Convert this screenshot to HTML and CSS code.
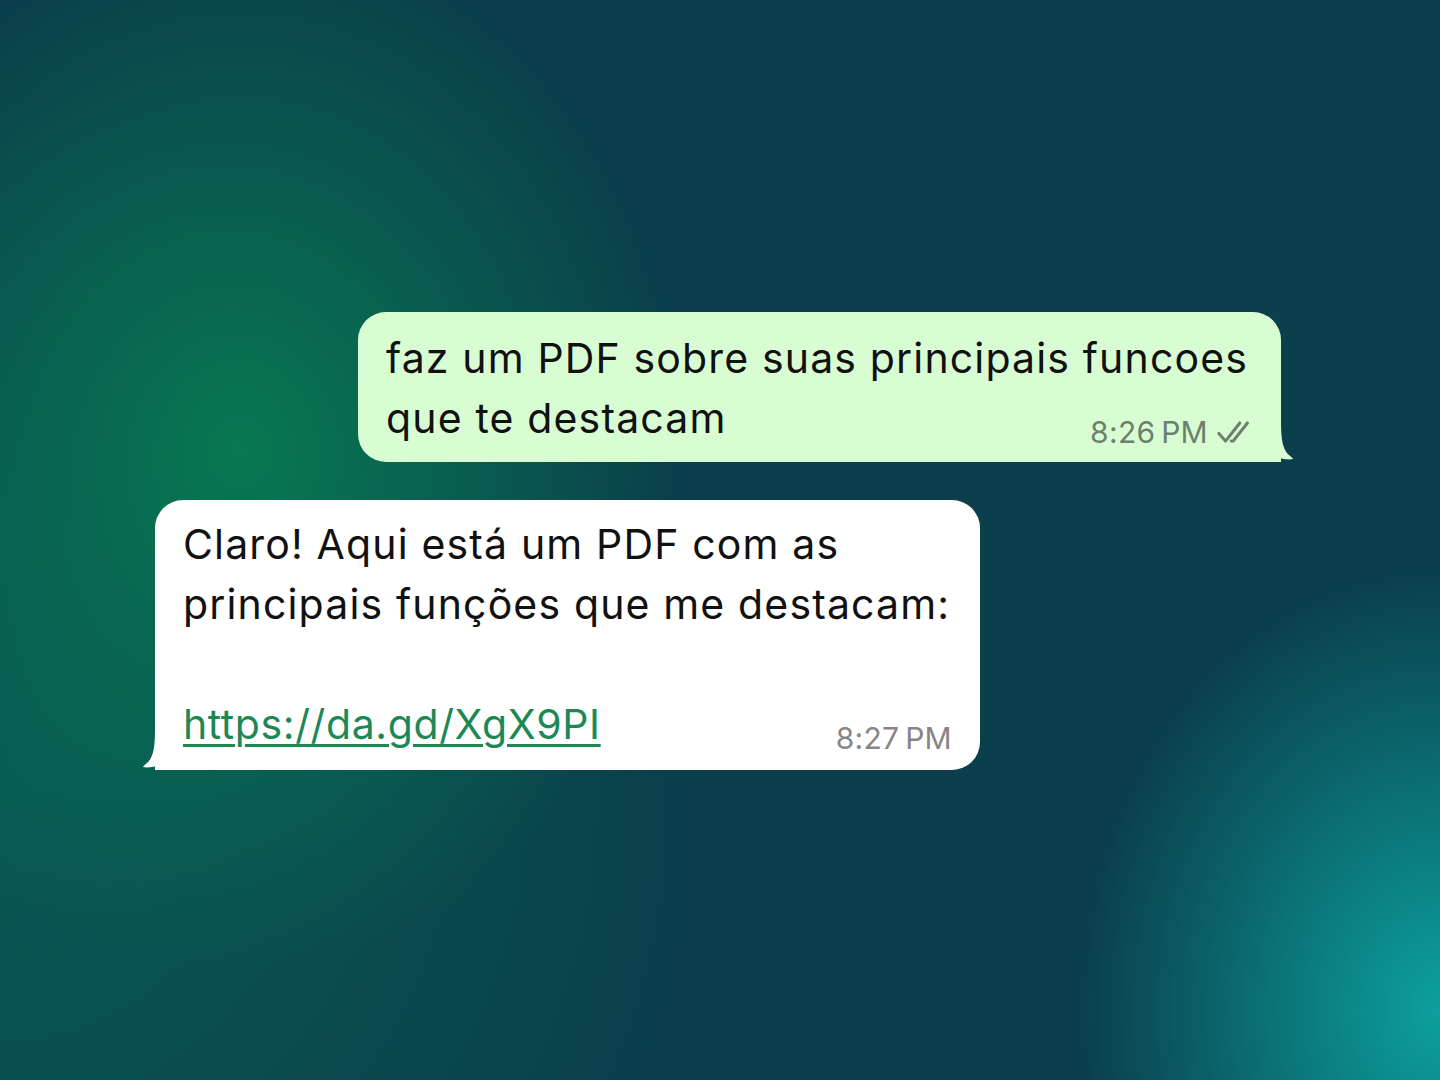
FILE: index.html
```html
<!DOCTYPE html>
<html lang="pt">
<head>
<meta charset="utf-8">
<link rel="stylesheet" href="styles.css">
</head>
<body>
<main class="chat">
  <div class="bubble out">
    <p class="text">faz um PDF sobre suas principais funcoes que te destacam<span class="meta">8:26&#8201;PM<svg class="ticks" viewBox="0 0 42 26" width="40" height="25"><path d="M3 14 L10 22 L25 3 M16 22 L18 22 L33 3" fill="none" stroke="#6e7f6e" stroke-width="3.2" stroke-linecap="round" stroke-linejoin="round"/></svg></span></p>
    <svg class="tail tail-out" viewBox="0 0 24 40" width="24" height="40"><path d="M0 0 L12 0 C12 18 14 28 20 33 C22 35 24 36 24 37 C20 38 14 37 10 36 C6 38 3 40 0 40 Z" fill="#d9fdd3"/></svg>
  </div>
  <div class="bubble in">
    <p class="text">Claro! Aqui está um PDF com as principais funções que me destacam:<br><br><a class="link" href="#">https://da.gd/XgX9PI</a><span class="meta">8:27&#8201;PM</span></p>
    <svg class="tail tail-in" viewBox="0 0 24 40" width="24" height="40"><path d="M24 0 L12 0 C12 18 10 28 4 33 C2 35 0 36 0 37 C4 38 10 37 14 36 C18 38 21 40 24 40 Z" fill="#ffffff"/></svg>
  </div>
</main>
</body>
</html>
```
FILE: styles.css
```css
html, body {
  margin: 0;
  padding: 0;
  width: 1440px;
  height: 1080px;
  overflow: hidden;
}
body {
  font-family: "Inter", "Noto Sans", sans-serif;
  background:
    radial-gradient(ellipse 440px 520px at 240px 450px, rgba(8,122,82,0.95), rgba(8,122,82,0) 100%),
    radial-gradient(ellipse 360px 440px at 1440px 1010px, rgba(12,165,162,0.95), rgba(12,160,160,0) 100%),
    radial-gradient(ellipse 700px 700px at 0px 800px, rgba(8,110,90,0.55), rgba(8,110,90,0) 100%),
    #0a3f4b;
}
.chat {
  display: flex;
  flex-direction: column;
  align-items: flex-start;
  gap: 38px;
  padding-top: 312px;
}
.bubble {
  position: relative;
  box-sizing: border-box;
  border-radius: 28px;
  padding: 16px 28px 14px 28px;
}
.bubble.out {
  margin-left: 358px;
  width: 923px;
  background: #d9fdd3;
  border-bottom-right-radius: 0;
}
.bubble.in {
  margin-left: 155px;
  width: 825px;
  background: #ffffff;
  border-bottom-left-radius: 0;
  padding: 14px 16px 16px 28px;
}
.text {
  margin: 0;
  font-size: 41px;
  line-height: 60px;
  color: #111;
  letter-spacing: 1.15px;
}
.link {
  color: #1d8856;
  text-decoration: underline;
  text-decoration-thickness: 2.5px;
  text-underline-offset: 5px;
  letter-spacing: 0.6px;
}
.meta {
  float: right;
  display: flex;
  align-items: center;
  gap: 8px;
  margin-top: 26px;
  margin-bottom: -40px;
  font-size: 30px;
  line-height: 36px;
  letter-spacing: 0.3px;
}
.out .meta {
  margin-right: -3px;
  color: #6e7f6e;
}
.in .meta {
  margin-right: 12px;
  color: #868686;
}
.tail {
  position: absolute;
  bottom: 0;
}
.tail-out {
  right: -12px;
}
.tail-in {
  left: -12px;
}
```
